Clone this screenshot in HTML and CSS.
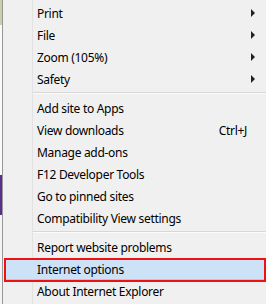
FILE: index.html
```html
<!DOCTYPE html>
<html>
<head>
<meta charset="utf-8">
<link rel="stylesheet" href="styles.css">
</head>
<body>
<div class="page">
  <div class="backdrop">
    <div class="bd-top"></div>
    <div class="bd-white"></div>
    <div class="bd-purple"></div>
    <div class="bd-rest"></div>
  </div>
  <div class="menu">
    <div class="gutter"></div>
    <ul class="items">
      <li class="item"><span class="label">Print</span><span class="arrow"></span></li>
      <li class="item"><span class="label">File</span><span class="arrow"></span></li>
      <li class="item"><span class="label">Zoom (105%)</span><span class="arrow"></span></li>
      <li class="item"><span class="label">Safety</span><span class="arrow"></span></li>
      <li class="sep"></li>
      <li class="item"><span class="label">Add site to Apps</span></li>
      <li class="item"><span class="label">View downloads</span><span class="key">Ctrl+J</span></li>
      <li class="item"><span class="label">Manage add-ons</span></li>
      <li class="item"><span class="label">F12 Developer Tools</span></li>
      <li class="item"><span class="label">Go to pinned sites</span></li>
      <li class="item"><span class="label">Compatibility View settings</span></li>
      <li class="sep"></li>
      <li class="item"><span class="label">Report website problems</span></li>
      <li class="item selected"><span class="label">Internet options</span></li>
      <li class="item"><span class="label">About Internet Explorer</span></li>
    </ul>
  </div>
  <div class="annot"></div>
</div>
</body>
</html>
```
FILE: styles.css
```css
html, body {
  margin: 0;
  padding: 0;
  background: #f0f0f0;
}
.page {
  position: relative;
  display: flex;
  width: 266px;
  height: 304px;
  overflow: hidden;
  font-family: "Noto Sans", "Open Sans", sans-serif;
  font-size: 12px;
  letter-spacing: -0.3px;
  color: #000;
}
.backdrop {
  width: 2px;
  display: flex;
  flex-direction: column;
}
.bd-top { height: 25px; background: #c9cfa8; }
.bd-white { height: 150px; background: #fafafa; }
.bd-purple { height: 40px; background: #5b2d8c; }
.bd-rest { flex: 1; background: #f4f4f4; }
.menu {
  position: relative;
  flex: 1;
  border-left: 1px solid #979797;
  background: #f0f0f0;
}
.gutter {
  position: absolute;
  left: 29px;
  top: 0;
  bottom: 0;
  width: 1px;
  background: #e2e2e2;
}
.items {
  list-style: none;
  margin: 0;
  padding: 2px 0 0 0;
}
.item {
  position: relative;
  display: flex;
  align-items: center;
  height: 22px;
  padding-left: 34px;
  padding-right: 11px;
  box-sizing: border-box;
}
.label { flex: 1; white-space: nowrap; }
.key { margin-right: 8px; }
.arrow {
  width: 0;
  height: 0;
  border-top: 4px solid transparent;
  border-bottom: 4px solid transparent;
  border-left: 4px solid #222;
}
.sep {
  height: 1px;
  margin: 2px 0 3px 29px;
  background: #d7d7d7;
  border-bottom: 1px solid #fcfcfc;
}
.item.selected {
  background: #cde2f6;
  box-shadow: inset 0 0 0 1px #a9cbee;
  margin-left: 2px;
  padding-left: 32px;
}
.annot {
  position: absolute;
  left: 4px;
  top: 258px;
  width: 262px;
  height: 24px;
  box-sizing: border-box;
  border: 2px solid #ee1111;
}
```
